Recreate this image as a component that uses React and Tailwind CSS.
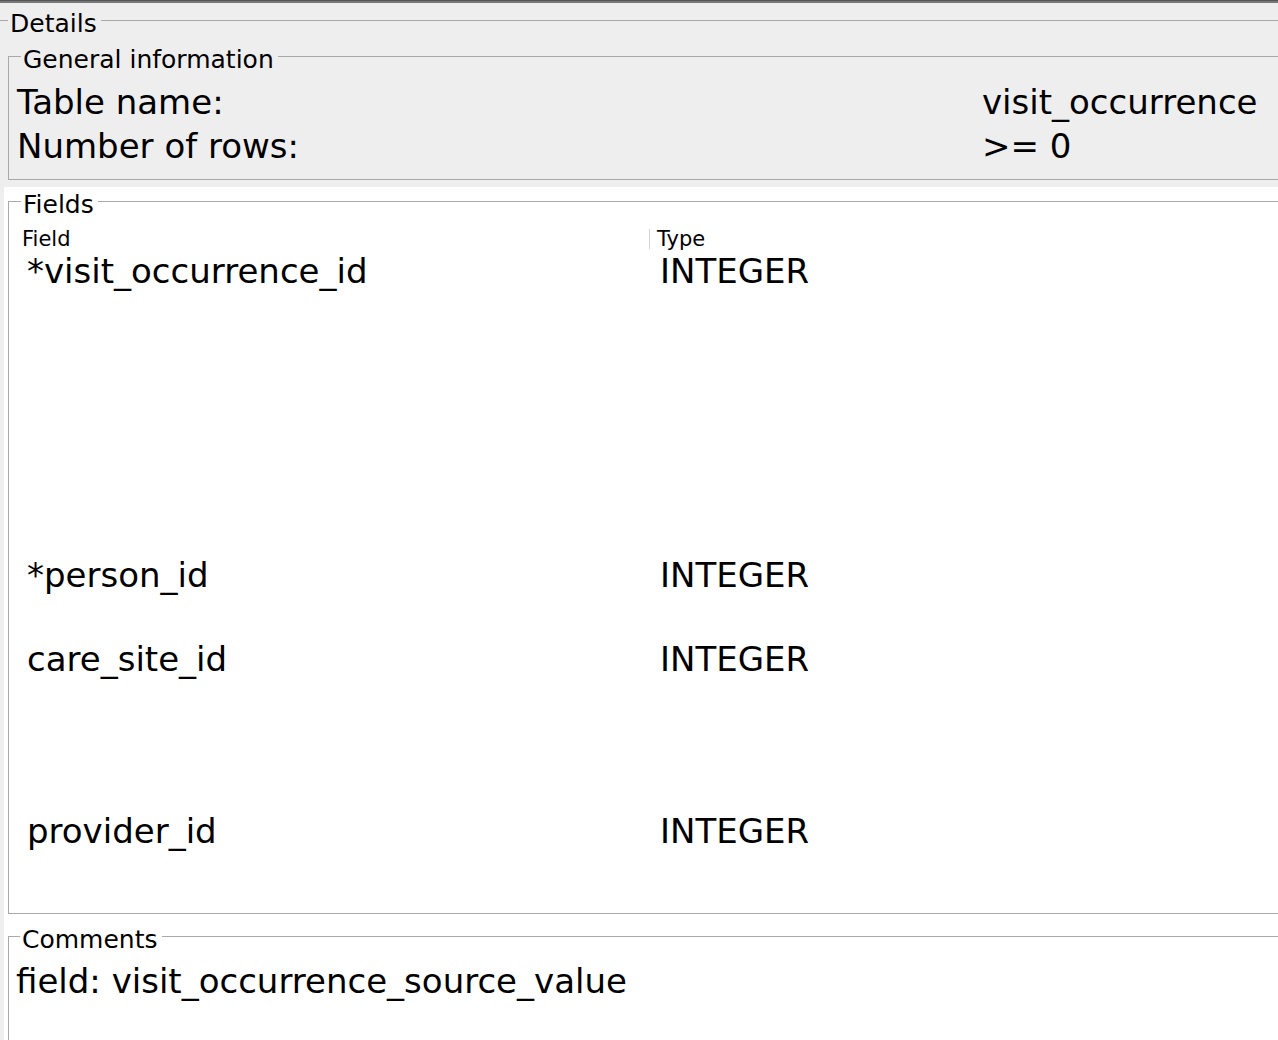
export default function App() {
  const legend = "ml-[4px] pl-[2px] pr-[4px] pt-[8px] text-[25px] leading-[20px]";
  const rows = [
    { name: "*visit_occurrence_id", type: "INTEGER", h: "h-[304px]" },
    { name: "*person_id", type: "INTEGER", h: "h-[84px]" },
    { name: "care_site_id", type: "INTEGER", h: "h-[172px]" },
    { name: "provider_id", type: "INTEGER", h: "h-[102px]" },
  ];
  return (
    <div className="w-[1278px] h-[1040px] overflow-hidden bg-[#eeeeee] text-black font-['DejaVu_Sans',sans-serif]">
      <div className="h-[1px] bg-[#555555]" />
      <div className="h-[2px] bg-[#787878]" />
      <fieldset className="mt-[3px] -ml-px w-[1330px] border border-[#a9a9a9] px-[4px] pt-[8px] pb-0">
        <legend className={legend}>Details</legend>
        <fieldset className="ml-[4px] border border-[#a9a9a9] pl-[8px] pt-[10px] pb-[11px]">
          <legend className={legend}>General information</legend>
          <div className="grid grid-cols-[965px_1fr] text-[34px] leading-[44px]">
            <div>Table name:</div>
            <div>visit_occurrence</div>
            <div>Number of rows:</div>
            <div>&gt;= 0</div>
          </div>
        </fieldset>
        <div className="mt-[7px] bg-white pb-[300px]">
          <fieldset className="ml-[4px] border border-[#a9a9a9] pl-[8px] pt-[11px]">
            <legend className={legend}>Fields</legend>
            <div className="grid grid-cols-[632px_1fr] h-[24px] text-[21px]">
              <div className="mt-[3px] h-[20px] leading-[20px] pl-[5px]">Field</div>
              <div className="mt-[3px] h-[20px] leading-[20px] pl-[7px] border-l border-[#d4d4d4]">Type</div>
            </div>
            <div className="pt-[1px] text-[34px] leading-[40px]">
              {rows.map((r) => (
                <div key={r.name} className={`grid grid-cols-[632px_1fr] ${r.h}`}>
                  <div className="pl-[10px]">{r.name}</div>
                  <div className="pl-[11px]">{r.type}</div>
                </div>
              ))}
            </div>
          </fieldset>
          <fieldset className="ml-[4px] mt-[8px] border border-[#a9a9a9] pl-[7px] pt-[11px] pb-[200px]">
            <legend className={legend}>Comments</legend>
            <div className="text-[34px] leading-[40px]">field: visit_occurrence_source_value</div>
          </fieldset>
        </div>
      </fieldset>
    </div>
  );
}
